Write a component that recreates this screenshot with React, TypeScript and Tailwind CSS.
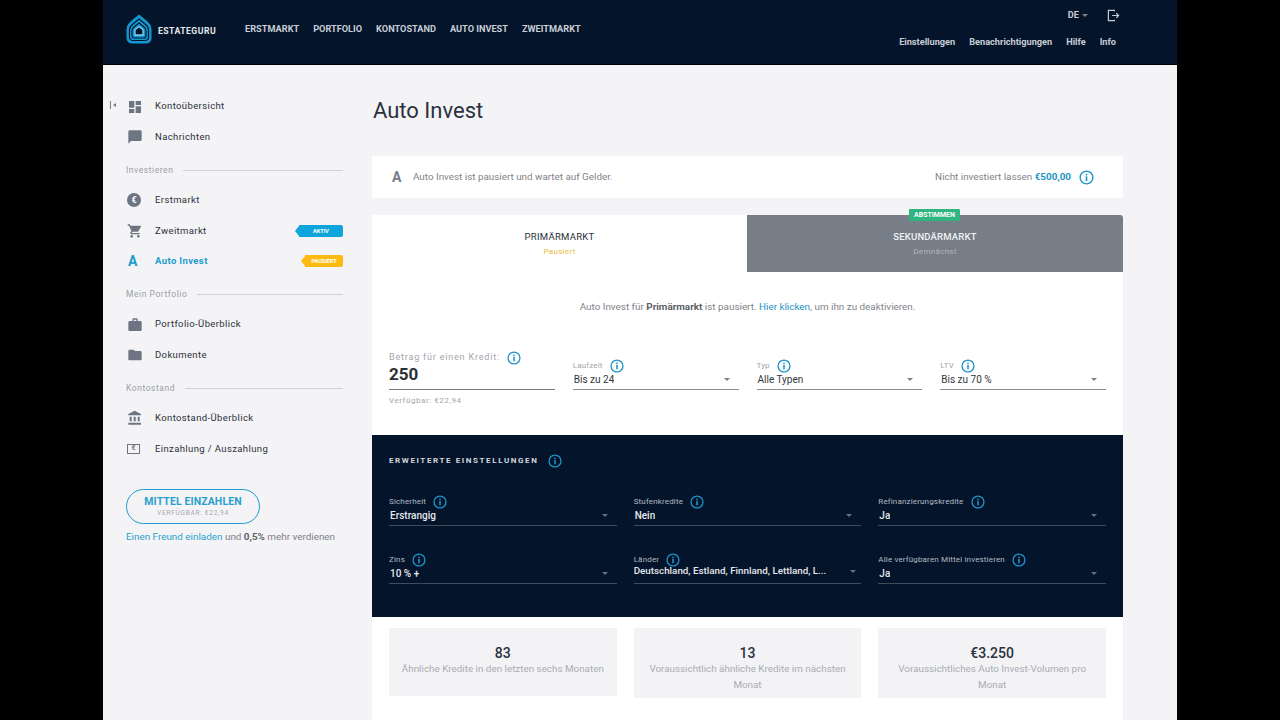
import React from 'react';

const ICONS: Record<string, string> = {
  dashboard: 'M3 13h8V3H3v10zm0 8h8v-6H3v6zm10 0h8V11h-8v10zm0-18v6h8V3h-8z',
  chat: 'M20 2H4c-1.1 0-2 .9-2 2v18l4-4h14c1.1 0 2-.9 2-2V4c0-1.1-.9-2-2-2z',
  cart: 'M7 18c-1.1 0-1.99.9-1.99 2S5.9 22 7 22s2-.9 2-2-.9-2-2-2zM1 2v2h2l3.6 7.59-1.35 2.45c-.16.28-.25.61-.25.96 0 1.1.9 2 2 2h12v-2H7.42c-.14 0-.25-.11-.25-.25l.03-.12.9-1.63h7.45c.75 0 1.41-.41 1.75-1.03l3.58-6.49c.08-.14.12-.31.12-.48 0-.55-.45-1-1-1H5.21l-.94-2H1zm16 16c-1.1 0-1.99.9-1.99 2s.89 2 1.99 2 2-.9 2-2-.9-2-2-2z',
  work: 'M20 6h-4V4c0-1.11-.89-2-2-2h-4c-1.11 0-2 .89-2 2v2H4c-1.11 0-1.99.89-1.99 2L2 19c0 1.11.89 2 2 2h16c1.11 0 2-.89 2-2V8c0-1.11-.89-2-2-2zm-6 0h-4V4h4v2z',
  folder: 'M10 4H4c-1.1 0-1.99.9-1.99 2L2 18c0 1.1.9 2 2 2h16c1.1 0 2-.9 2-2V8c0-1.1-.9-2-2-2h-8l-2-2z',
  bank: 'M4 10v7h3v-7H4zm6 0v7h3v-7h-3zM2 22h19v-3H2v3zm14-12v7h3v-7h-3zm-4.5-9L2 6v2h19V6l-9.5-5z',
};

const MaterialIcon = ({ name }: { name: string }) => (
  <svg viewBox="0 0 24 24" className="w-4 h-4 fill-[#6d7583]">
    <path d={ICONS[name]} />
  </svg>
);

const InfoIcon = ({ size = 'small' }: { size?: 'small' | 'large' }) => (
  <svg viewBox="0 0 16 16" className={size === 'large' ? 'w-[15px] h-[15px] shrink-0' : 'w-[14px] h-[14px] shrink-0'}>
    <circle cx="8" cy="8" r="6.8" fill="none" stroke="#1e94c8" strokeWidth="1.5" />
    <circle cx="8" cy="4.9" r="1" fill="#1e94c8" />
    <rect x="7.1" y="6.7" width="1.8" height="5" fill="#1e94c8" />
  </svg>
);

const Logo = () => (
  <svg viewBox="0 0 26 30" className="w-[26px] h-[30px] shrink-0" fill="none" stroke="#1497cf">
    <path d="M13 1 L21 7.5 Q25 11 25 15 L25 24 Q25 29 20 29 L6 29 Q1 29 1 24 L1 15 Q1 11 5 7.5 Z" fill="#1497cf" strokeWidth="1" />
    <path d="M13 5 L19 10 Q22.500 12.500 22.500 16 L22.500 23 Q22.500 26.500 19 26.500 L7 26.500 Q3.500 26.500 3.500 23 L3.500 16 Q3.500 12.500 7 10 Z" stroke="#03142b" strokeWidth="1.200" />
    <path d="M13 9 L18 13 Q20 14.500 20 17 L20 21.500 Q20 24 17.500 24 L8.500 24 Q6 24 6 21.500 L6 17 Q6 14.500 8 13 Z" stroke="#03142b" strokeWidth="1.200" />
    <path d="M13 12.500 L17 15.700 L17 21 L9 21 L9 15.700 Z" fill="#03142b" stroke="#7fd0ee" strokeWidth="1.300" />
  </svg>
);

const Caret = ({ dark }: { dark?: boolean }) => (
  <span className={`w-0 h-0 border-x-[3.500px] border-x-transparent border-t-[3.500px] ${dark ? 'border-t-[#66717f]' : 'border-t-[#7b7f86]'}`} />
);

const NavItem = ({ icon, label, active, badge }: { icon: React.ReactNode; label: string; active?: boolean; badge?: React.ReactNode }) => (
  <div className="h-[30.400px] flex items-center">
    <div className="w-[29px] pl-[1px] flex items-center">{icon}</div>
    <span className={`text-[9.500px] tracking-[0.04em] ${active ? 'text-[#1d9ccd] font-bold' : 'text-[#2c3039]'}`}>{label}</span>
    <div className="ml-auto">{badge}</div>
  </div>
);

const SectionTitle = ({ label }: { label: string }) => (
  <div className="h-[33px] pt-[3px] flex items-center gap-[10px]">
    <span className="text-[8.500px] tracking-[0.065em] text-[#9b9fa6]">{label}</span>
    <div className="flex-1 h-[1px] bg-[#cfd1d5]" />
  </div>
);

const Badge = ({ label, tone, width }: { label: string; tone: 'blue' | 'yellow'; width: string }) => (
  <div className="flex items-center">
    <span className={`w-0 h-0 border-y-[5px] border-y-transparent border-r-[4px] ${tone === 'blue' ? 'border-r-[#0ea5dc]' : 'border-r-[#fdbb12]'}`} />
    <span className={`${width} h-[12px] rounded-r-[2px] flex items-center justify-center text-[5.500px] font-bold text-white ${tone === 'blue' ? 'bg-[#0ea5dc]' : 'bg-[#fdbb12]'}`}>{label}</span>
  </div>
);

const Field = ({ label, value, dark, bold, raised }: { label: string; value: string; dark?: boolean; bold?: boolean; raised?: boolean }) => (
  <div className="min-w-0">
    <div className="flex items-center h-[13px] gap-[7px]">
      <span className={`text-[8px] tracking-[0.02em] ${dark ? 'text-[#b4bac3]' : 'text-[#a2a5ab]'}`}>{label}</span>
      <InfoIcon />
    </div>
    <div className={`h-[18px] flex items-center justify-between border-b ${raised ? 'pb-[7px] pr-[5px]' : 'pb-[2px] pr-[9px]'} ${dark ? 'border-[#3f4c5e]' : 'border-[#8b8e94]'}`}>
      <span className={`truncate ${raised ? 'text-[9.800px]' : 'text-[10px] pl-[1px]'} ${dark ? 'text-[#e6e8eb]' : 'text-[#33363d]'} ${bold ? 'font-medium' : ''}`}>{value}</span>
      <Caret dark={dark} />
    </div>
  </div>
);

const Stat = ({ value, text, tall }: { value: string; text: string; tall?: boolean }) => (
  <div className={`bg-[#f3f3f6] text-center px-2 pt-[18px] ${tall ? 'h-[70px]' : 'h-[68px]'}`}>
    <div className="text-[14px] leading-[15px] font-medium text-[#2a3140]">{value}</div>
    <div className="text-[9.850px] leading-[16px] text-[#a9acb3]">{text}</div>
  </div>
);

const App = () => {
  return (
    <div className="h-screen overflow-hidden bg-black flex justify-center font-['Roboto',sans-serif]">
      <div className="w-[1074px] flex flex-col bg-[#f4f4f6]">
        <header className="h-[65px] shrink-0 bg-[#03142b] border-b border-black flex justify-between pl-[23px] pr-[61px]">
          <div className="flex items-start">
            <div className="flex items-center gap-[6px] pt-[14px]">
              <Logo />
              <span className="text-[8.700px] font-bold tracking-[0.05em] text-[#e4e8ec] mt-[6px]">ESTATEGURU</span>
            </div>
            <nav className="flex gap-[14px] ml-[29px] mt-[23px] text-[9.200px] leading-[12px] font-bold text-[#c8cdd5]">
              <span>ERSTMARKT</span>
              <span>PORTFOLIO</span>
              <span>KONTOSTAND</span>
              <span>AUTO INVEST</span>
              <span>ZWEITMARKT</span>
            </nav>
          </div>
          <div className="flex flex-col items-end">
            <div className="flex items-center h-[16px] mt-[7px] -mr-[4px]">
              <span className="text-[9.200px] font-bold text-[#c8cdd5] mr-[3px]">DE</span>
              <Caret />
              <svg viewBox="0 0 14 14" className="w-[13px] h-[13px] ml-[19px]" fill="none" stroke="#c8cdd5" strokeWidth="1.300">
                <path d="M8 2.500V1.500H1.500v11H8v-1M5.500 7h7M10 4.500 12.500 7 10 9.500" />
              </svg>
            </div>
            <nav className="flex gap-[14px] mt-[13px] text-[9.200px] leading-[12px] font-bold text-[#c8cdd5]">
              <span>Einstellungen</span>
              <span>Benachrichtigungen</span>
              <span>Hilfe</span>
              <span>Info</span>
            </nav>
          </div>
        </header>

        <div className="flex flex-1 min-h-0">
          <aside className="relative w-[240px] shrink-0 pl-[23px] pt-[26.400px]">
            <div className="absolute left-[7px] top-[36px] flex items-center gap-[2px]">
              <span className="w-[1px] h-[8px] bg-[#777c85]" />
              <span className="w-0 h-0 border-y-[2.500px] border-y-transparent border-r-[3px] border-r-[#777c85]" />
            </div>
            <NavItem icon={<MaterialIcon name="dashboard" />} label="Kontoübersicht" />
            <NavItem icon={<MaterialIcon name="chat" />} label="Nachrichten" />
            <SectionTitle label="Investieren" />
            <NavItem
              icon={<span className="w-[14px] h-[14px] rounded-full bg-[#6d7583] text-white text-[9px] font-bold flex items-center justify-center">€</span>}
              label="Erstmarkt"
            />
            <NavItem icon={<MaterialIcon name="cart" />} label="Zweitmarkt" badge={<Badge label="AKTIV" tone="blue" width="w-[44px]" />} />
            <NavItem
              icon={<span className="pl-[1px] text-[14px] leading-none font-bold text-[#1d9ccd]">A</span>}
              label="Auto Invest"
              active
              badge={<Badge label="PAUSIERT" tone="yellow" width="w-[38px]" />}
            />
            <SectionTitle label="Mein Portfolio" />
            <NavItem icon={<MaterialIcon name="work" />} label="Portfolio-Überblick" />
            <NavItem icon={<MaterialIcon name="folder" />} label="Dokumente" />
            <SectionTitle label="Kontostand" />
            <NavItem icon={<MaterialIcon name="bank" />} label="Kontostand-Überblick" />
            <NavItem
              icon={<span className="w-[13px] h-[10px] border border-[#6d7583] text-[#6d7583] text-[7px] font-bold flex items-center justify-center">€</span>}
              label="Einzahlung / Auszahlung"
            />
            <div className="mt-[25px] w-[134px] h-[35px] rounded-full border border-[#1d9ccd] flex flex-col items-center justify-center">
              <span className="text-[10.500px] leading-[13px] font-bold tracking-[0.01em] text-[#2a9fcd]">MITTEL EINZAHLEN</span>
              <span className="text-[6.500px] leading-[10px] tracking-[0.115em] text-[#a5a8ae]">VERFÜGBAR: €22,94</span>
            </div>
            <p className="mt-[6px] text-[9.900px] leading-[13px] whitespace-nowrap text-[#7c8088]">
              <span className="text-[#2a9fcd]">Einen Freund einladen</span> und <span className="font-bold text-[#5e6269]">0,5%</span> mehr verdienen
            </p>
          </aside>

          <main className="w-[751px] ml-[29px] shrink-0">
            <h1 className="mt-[32px] h-[28px] pl-[1px] text-[22px] leading-[28px] text-[#2a3140]">Auto Invest</h1>
            <div className="mt-[31px] h-[42px] bg-white flex items-center pl-[20px] pr-[29px]">
              <span className="w-[21px] text-[14px] font-bold text-[#767b85]">A</span>
              <span className="text-[9.850px] text-[#7f838a]">Auto Invest ist pausiert und wartet auf Gelder.</span>
              <span className="ml-auto text-[9.850px] text-[#7f838a]">Nicht investiert lassen <span className="font-bold text-[#1d94c2]">€500,00</span></span>
              <span className="ml-[8px]"><InfoIcon size="large" /></span>
            </div>

            <div className="mt-[17px] flex h-[57px]">
              <div className="w-[375px] bg-white flex flex-col items-center pt-[15px]">
                <span className="text-[9.500px] leading-[13px] tracking-[0.03em] text-[#2a2e36]">PRIMÄRMARKT</span>
                <span className="mt-[3px] text-[8px] leading-[11px] tracking-[0.04em] text-[#e8c040]">Pausiert</span>
              </div>
              <div className="relative flex-1 bg-[#777e88] rounded-tr-[3px] flex flex-col items-center pt-[15px]">
                <span className="absolute -top-[6px] left-[162px] w-[51px] h-[12px] bg-[#30b57f] rounded-[1px] flex items-center justify-center text-[7px] font-bold text-white">ABSTIMMEN</span>
                <span className="text-[9.500px] leading-[13px] font-medium tracking-[0.02em] text-[#f0f1f3]">SEKUNDÄRMARKT</span>
                <span className="mt-[3px] text-[8px] leading-[11px] tracking-[0.04em] text-[#b2b6bd]">Demnächst</span>
              </div>
            </div>

            <div className="bg-white h-[163px]">
              <p className="pt-[28px] text-center text-[9.900px] leading-[14px] text-[#7f838a]">
                Auto Invest für <span className="font-bold text-[#5b5f66]">Primärmarkt</span> ist pausiert. <span className="text-[#1d94c2]">Hier klicken</span>, um ihn zu deaktivieren.
              </p>
              <div className="grid grid-cols-4 gap-x-[18px] px-[17px] mt-[45px]">
                <div className="-mt-[8px]">
                  <div className="flex items-center h-[14px] gap-[7px]">
                    <span className="text-[9px] tracking-[0.09em] text-[#a2a5ab]">Betrag für einen Kredit:</span>
                    <InfoIcon />
                  </div>
                  <div className="h-[25px] border-b border-[#77797e] text-[17px] leading-[19px] font-bold text-[#2b2f37]">250</div>
                  <div className="mt-[5px] text-[8px] leading-[12px] tracking-[0.07em] text-[#a2a5ab]">Verfügbar: €22,94</div>
                </div>
                <Field label="Laufzeit" value="Bis zu 24" />
                <Field label="Typ" value="Alle Typen" />
                <Field label="LTV" value="Bis zu 70 %" />
              </div>
            </div>

            <div className="bg-[#03142b] h-[182px] px-[17px] pt-[20px]">
              <div className="flex items-center h-[12px] gap-[10px]">
                <span className="text-[8px] font-bold tracking-[0.2em] text-[#d3d7dc]">ERWEITERTE EINSTELLUNGEN</span>
                <InfoIcon />
              </div>
              <div className="grid grid-cols-3 gap-x-[17px] gap-y-[27px] mt-[28px]">
                <Field dark bold label="Sicherheit" value="Erstrangig" />
                <Field dark bold label="Stufenkredite" value="Nein" />
                <Field dark bold label="Refinanzierungskredite" value="Ja" />
                <Field dark bold label="Zins" value="10 % +" />
                <Field dark bold raised label="Länder" value="Deutschland, Estland, Finnland, Lettland, L..." />
                <Field dark bold label="Alle verfügbaren Mittel investieren" value="Ja" />
              </div>
            </div>

            <div className="bg-white h-[110px] px-[17px] pt-[11px]">
              <div className="grid grid-cols-3 gap-x-[17px] items-start">
                <Stat value="83" text="Ähnliche Kredite in den letzten sechs Monaten" />
                <Stat tall value="13" text="Voraussichtlich ähnliche Kredite im nächsten Monat" />
                <Stat tall value="€3.250" text="Voraussichtliches Auto Invest-Volumen pro Monat" />
              </div>
            </div>
          </main>
        </div>
      </div>
    </div>
  );
};

export default App;
